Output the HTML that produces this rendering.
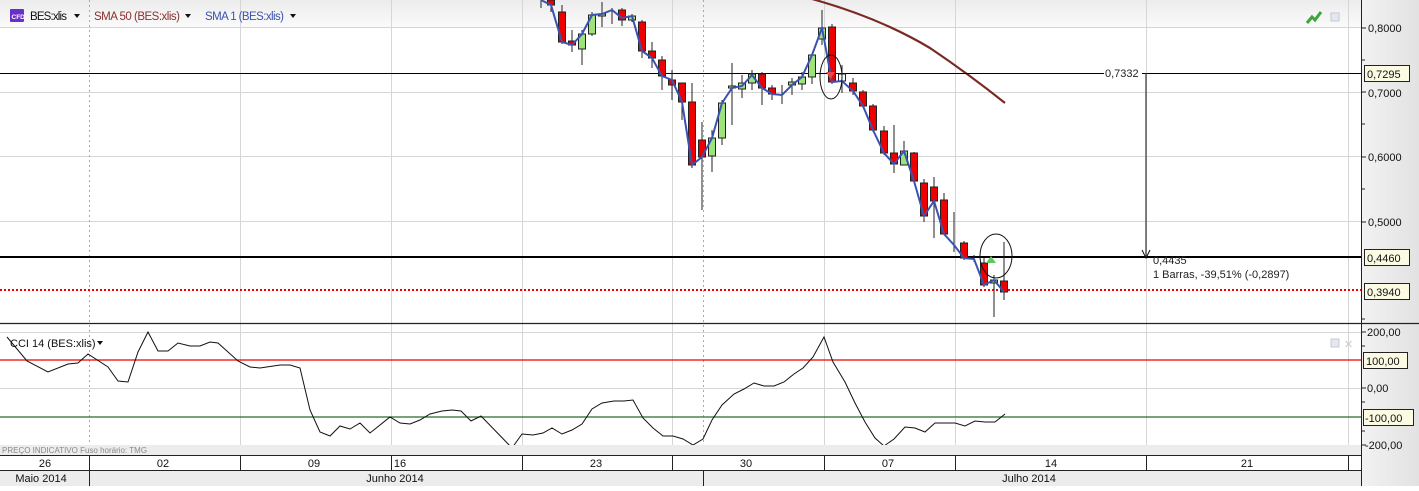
<!DOCTYPE html>
<html><head><meta charset="utf-8"><style>
html,body{margin:0;padding:0;background:#fff;}
body{width:1419px;height:486px;overflow:hidden;font-family:"Liberation Sans","DejaVu Sans",sans-serif;}
svg text{font-family:"Liberation Sans","DejaVu Sans",sans-serif;}
</style></head><body>
<svg width="1419" height="486" viewBox="0 0 1419 486" xmlns="http://www.w3.org/2000/svg">
<defs>
<linearGradient id="ax" x1="0" x2="1"><stop offset="0" stop-color="#f2f2f2"/><stop offset="1" stop-color="#e2e2e2"/></linearGradient>
<linearGradient id="hd" x1="0" y1="0" x2="0" y2="1"><stop offset="0" stop-color="#ececec"/><stop offset="1" stop-color="#fafafa"/></linearGradient>
</defs>
<rect x="0" y="0" width="1419" height="486" fill="#fff"/>
<rect x="0" y="0" width="1361" height="27" fill="url(#hd)"/>
<rect x="1361" y="0" width="58" height="486" fill="url(#ax)"/>
<g stroke="#d6d6d6" stroke-width="1">
<line x1="0" y1="27.5" x2="1361" y2="27.5"/>
<line x1="0" y1="92.5" x2="1361" y2="92.5"/>
<line x1="0" y1="156.5" x2="1361" y2="156.5"/>
<line x1="0" y1="221.5" x2="1361" y2="221.5"/>
<line x1="0" y1="332.5" x2="1361" y2="332.5"/>
<line x1="0" y1="388.5" x2="1361" y2="388.5"/>
<line x1="0" y1="445.5" x2="1361" y2="445.5"/>
</g>
<g stroke="#d6d6d6" stroke-width="1">
<line x1="240.5" y1="0" x2="240.5" y2="455"/>
<line x1="391.5" y1="0" x2="391.5" y2="455"/>
<line x1="522.5" y1="0" x2="522.5" y2="455"/>
<line x1="672.5" y1="0" x2="672.5" y2="455"/>
<line x1="824.5" y1="0" x2="824.5" y2="455"/>
<line x1="955.5" y1="0" x2="955.5" y2="455"/>
<line x1="1146.5" y1="0" x2="1146.5" y2="455"/>
<line x1="1348.5" y1="0" x2="1348.5" y2="455"/>
</g>
<g stroke="#aaa" stroke-width="1" stroke-dasharray="2,3">
<line x1="89.5" y1="0" x2="89.5" y2="455"/>
<line x1="703.5" y1="0" x2="703.5" y2="455"/>
</g>
<rect x="10" y="9" width="14" height="13" rx="1" fill="#6a2fc8"/>
<text x="11.5" y="19" font-size="6.5" fill="#fff" font-weight="bold">CFD</text>
<text x="30" y="20" font-size="11.5" fill="#111" textLength="37">BES:xlis</text>
<path d="M74 14 l6 0 l-3 4z" fill="#111"/>
<text x="94" y="20" font-size="11.5" fill="#8b2f2f" textLength="86">SMA 50 (BES:xlis)</text>
<path d="M185 14 l6 0 l-3 4z" fill="#111"/>
<text x="205" y="20" font-size="11.5" fill="#3b52b0" textLength="79">SMA 1 (BES:xlis)</text>
<path d="M290 14 l6 0 l-3 4z" fill="#111"/>
<path d="M1307 23 l5 -6 l3 3 l6 -8" stroke="#3aa63a" stroke-width="3" fill="none"/>
<rect x="1331" y="13" width="8" height="8" fill="#e4e8ee" stroke="#c4cad4"/>
<path d="M812 -1 Q 880 18 930 48 Q 970 75 1005 103" stroke="#7a2a24" stroke-width="2.2" fill="none"/>
<line x1="0" y1="73.5" x2="1361" y2="73.5" stroke="#000" stroke-width="1"/>
<line x1="0" y1="257" x2="1361" y2="257" stroke="#000" stroke-width="2"/>
<line x1="0" y1="290" x2="1361" y2="290" stroke="#e00" stroke-width="2" stroke-dasharray="2,2"/>
<g stroke="#222" stroke-width="1">
<line x1="541" y1="0" x2="541" y2="8"/><line x1="551" y1="0" x2="551" y2="12"/>
<line x1="562" y1="5" x2="562" y2="44"/><line x1="572" y1="30" x2="572" y2="52"/>
<line x1="582" y1="30" x2="582" y2="65"/><line x1="592" y1="12" x2="592" y2="36"/>
<line x1="602" y1="2" x2="602" y2="27"/><line x1="612" y1="8" x2="612" y2="24"/>
<line x1="622" y1="8" x2="622" y2="26"/><line x1="632" y1="14" x2="632" y2="22"/>
<line x1="642" y1="20" x2="642" y2="58"/><line x1="652" y1="42" x2="652" y2="68"/>
<line x1="662" y1="56" x2="662" y2="90"/><line x1="672" y1="70" x2="672" y2="100"/>
<line x1="682" y1="83" x2="682" y2="120"/><line x1="692" y1="83" x2="692" y2="168"/>
<line x1="702" y1="122" x2="702" y2="210"/><line x1="712" y1="130" x2="712" y2="172"/>
<line x1="722" y1="100" x2="722" y2="145"/><line x1="732" y1="63" x2="732" y2="125"/>
<line x1="742" y1="75" x2="742" y2="98"/><line x1="752" y1="70" x2="752" y2="90"/>
<line x1="762" y1="72" x2="762" y2="105"/><line x1="772" y1="85" x2="772" y2="100"/>
<line x1="782" y1="85" x2="782" y2="104"/><line x1="792" y1="78" x2="792" y2="95"/>
<line x1="802" y1="72" x2="802" y2="90"/><line x1="812" y1="55" x2="812" y2="84"/>
<line x1="822" y1="10" x2="822" y2="45"/><line x1="832" y1="24" x2="832" y2="84"/>
<line x1="842" y1="65" x2="842" y2="93"/><line x1="853" y1="78" x2="853" y2="95"/>
<line x1="863" y1="90" x2="863" y2="108"/><line x1="873" y1="104" x2="873" y2="132"/>
<line x1="884" y1="126" x2="884" y2="155"/><line x1="894" y1="125" x2="894" y2="173"/>
<line x1="904" y1="141" x2="904" y2="165"/><line x1="914" y1="152" x2="914" y2="182"/>
<line x1="924" y1="179" x2="924" y2="222"/><line x1="934" y1="177" x2="934" y2="238"/>
<line x1="944" y1="193" x2="944" y2="234"/><line x1="954" y1="212" x2="954" y2="252"/>
<line x1="964" y1="241" x2="964" y2="260"/><line x1="974" y1="255" x2="974" y2="262"/>
<line x1="984" y1="258" x2="984" y2="287"/><line x1="994" y1="275" x2="994" y2="317"/>
<line x1="1004" y1="242" x2="1004" y2="300"/>
</g>
<g stroke="#222" stroke-width="1">
<rect x="547.5" y="0" width="7" height="5" fill="#e00"/>
<rect x="558.5" y="12" width="7" height="30" fill="#e00"/>
<rect x="568.5" y="41" width="7" height="4" fill="#e00"/>
<rect x="578.5" y="34" width="7" height="15" fill="#9de37a"/>
<rect x="588.5" y="15" width="7" height="19" fill="#9de37a"/>
<rect x="598.5" y="14" width="7" height="2" fill="#9de37a"/>
<rect x="618.5" y="10" width="7" height="10" fill="#e00"/>
<rect x="628.5" y="16" width="7" height="4" fill="#9de37a"/>
<rect x="638.5" y="22" width="7" height="29" fill="#e00"/>
<rect x="648.5" y="51" width="7" height="7" fill="#e00"/>
<rect x="658.5" y="60" width="7" height="16" fill="#e00"/>
<rect x="668.5" y="80" width="7" height="5" fill="#e00"/>
<rect x="678.5" y="83" width="7" height="19" fill="#e00"/>
<rect x="688.5" y="102" width="7" height="63" fill="#e00"/>
<rect x="698.5" y="140" width="7" height="17" fill="#e00"/>
<rect x="708.5" y="138" width="7" height="18" fill="#9de37a"/>
<rect x="718.5" y="103" width="7" height="35" fill="#9de37a"/>
<rect x="728.5" y="86" width="7" height="2" fill="#9de37a"/>
<rect x="738.5" y="83" width="7" height="6" fill="#9de37a"/>
<rect x="748.5" y="74" width="7" height="9" fill="#9de37a"/>
<rect x="758.5" y="74" width="7" height="14" fill="#e00"/>
<rect x="768.5" y="88" width="7" height="6" fill="#e00"/>
<rect x="788.5" y="82" width="7" height="3" fill="#9de37a"/>
<rect x="798.5" y="77" width="7" height="7" fill="#9de37a"/>
<rect x="808.5" y="55" width="7" height="22" fill="#9de37a"/>
<rect x="818.5" y="28" width="7" height="11" fill="#9de37a"/>
<rect x="828.5" y="27" width="7" height="55" fill="#e00"/>
<rect x="838.5" y="74" width="7" height="7" fill="#fff"/>
<rect x="849.5" y="83" width="7" height="8" fill="#e00"/>
<rect x="859.5" y="92" width="7" height="14" fill="#e00"/>
<rect x="869.5" y="106" width="7" height="24" fill="#e00"/>
<rect x="880.5" y="131" width="7" height="22" fill="#e00"/>
<rect x="890.5" y="153" width="7" height="11" fill="#e00"/>
<rect x="900.5" y="151" width="7" height="14" fill="#9de37a"/>
<rect x="910.5" y="153" width="7" height="28" fill="#e00"/>
<rect x="920.5" y="183" width="7" height="33" fill="#e00"/>
<rect x="930.5" y="187" width="7" height="14" fill="#e00"/>
<rect x="940.5" y="200" width="7" height="34" fill="#e00"/>
<rect x="960.5" y="243" width="7" height="15" fill="#e00"/>
<rect x="980.5" y="263" width="7" height="22" fill="#e00"/>
<rect x="990.5" y="280" width="7" height="3" fill="#9de37a"/>
<rect x="1000.5" y="281" width="7" height="11" fill="#e00"/>
</g>
<polyline fill="none" stroke="#3b52b0" stroke-width="2" points="541,0 551,5 562,42 572,45 582,34 592,15 602,14 612,10 622,18 632,16 642,51 652,58 662,76 672,80 682,102 692,165 702,157 712,138 722,103 732,88 742,86 752,75 762,88 772,94 782,95 792,85 802,77 812,55 822,28 832,82 842,81 853,91 863,106 873,130 884,153 894,164 904,151 914,181 924,216 934,201 944,234 954,245 964,258 974,259 984,285 994,280 1004,292"/>
<ellipse cx="831" cy="77" rx="11" ry="22" fill="none" stroke="#111"/>
<path d="M826 72 l9 0 l-4.5 7z" fill="#e84a4a"/>
<ellipse cx="996" cy="256" rx="16" ry="22" fill="none" stroke="#111"/>
<path d="M986 263 l10 0 l-5 -7z" fill="#5cc95c"/>
<line x1="1146" y1="73" x2="1146" y2="257" stroke="#333" stroke-width="1.2"/>
<path d="M1142 250 l4 8 l4 -8" stroke="#111" fill="none"/>
<rect x="1104" y="66" width="38" height="13" fill="#fff"/>
<text x="1105" y="77" font-size="11" fill="#222">0,7332</text>
<text x="1153" y="264" font-size="11" fill="#222">0,4435</text>
<text x="1153" y="278" font-size="11" fill="#222">1 Barras, -39,51% (-0,2897)</text>
<line x1="0" y1="323.5" x2="1419" y2="323.5" stroke="#222" stroke-width="1.3"/>
<line x1="0" y1="360" x2="1361" y2="360" stroke="#e00" stroke-width="1.3"/>
<line x1="0" y1="417" x2="1361" y2="417" stroke="#2a6a2a" stroke-width="1.2"/>
<text x="10" y="347" font-size="11" fill="#111">CCI 14 (BES:xlis)</text>
<path d="M97 341 l6 0 l-3 4z" fill="#111"/>
<rect x="1331" y="339" width="8" height="8" fill="#e4e8ee" stroke="#c4cad4"/>
<text x="1344" y="348" font-size="11" fill="#ccc">✕</text>
<polyline fill="none" stroke="#111" stroke-width="1" points="7,337 27,361 48,372 68,364 78,363 88,354 108,367 118,381 128,382 138,352 148,332 158,351 168,351 178,343 190,346 200,346 210,342 218,343 238,361 250,367 260,368 280,365 290,365 300,368 310,410 320,432 330,436 340,426 350,429 360,423 370,433 380,425 390,417 400,423 410,424 420,420 430,414 442,411 452,410 461,411 471,421 481,416 512,448 522,434 533,435 543,433 552,428 562,434 572,430 582,424 592,409 602,403 614,401 624,401 633,400 643,418 653,428 663,436 673,436 683,439 693,445 703,439 712,420 722,405 734,394 744,389 754,383 764,386 774,386 784,382 794,374 803,368 813,357 824,337 833,362 845,382 855,403 865,422 875,438 884,446 894,439 905,427 915,428 925,432 935,423 945,423 955,423 965,426 975,421 985,422 995,422 1005,414"/>
<rect x="0" y="445" width="1361" height="10" fill="#ececec"/>
<text x="2" y="453" font-size="8" fill="#888">PREÇO INDICATIVO   Fuso horário: TMG</text>
<rect x="0" y="455" width="1361" height="15" fill="#fff"/>
<rect x="0" y="470" width="1361" height="16" fill="#ececec"/>
<line x1="0" y1="455.5" x2="1361" y2="455.5" stroke="#222"/>
<line x1="0" y1="470.5" x2="1361" y2="470.5" stroke="#222"/>
<g stroke="#222">
<line x1="89.5" y1="455" x2="89.5" y2="486"/>
<line x1="240.5" y1="455" x2="240.5" y2="470"/>
<line x1="391.5" y1="455" x2="391.5" y2="470"/>
<line x1="522.5" y1="455" x2="522.5" y2="470"/>
<line x1="672.5" y1="455" x2="672.5" y2="470"/>
<line x1="824.5" y1="455" x2="824.5" y2="470"/>
<line x1="955.5" y1="455" x2="955.5" y2="470"/>
<line x1="1146.5" y1="455" x2="1146.5" y2="470"/>
<line x1="1348.5" y1="455" x2="1348.5" y2="470"/>
<line x1="703.5" y1="470" x2="703.5" y2="486"/>
</g>
<g font-size="11" fill="#111" text-anchor="middle">
<text x="45" y="467">26</text><text x="163" y="467">02</text><text x="314" y="467">09</text>
<text x="400" y="467">16</text><text x="596" y="467">23</text><text x="746" y="467">30</text>
<text x="888" y="467">07</text><text x="1051" y="467">14</text><text x="1247" y="467">21</text>
<text x="41" y="482">Maio 2014</text><text x="395" y="482">Junho 2014</text><text x="1029" y="482">Julho 2014</text>
</g>
<line x1="1361.5" y1="0" x2="1361.5" y2="486" stroke="#222"/>
<g stroke="#222">
<line x1="1361" y1="28" x2="1366" y2="28"/><line x1="1361" y1="60" x2="1365" y2="60"/>
<line x1="1361" y1="92" x2="1366" y2="92"/><line x1="1361" y1="124" x2="1365" y2="124"/>
<line x1="1361" y1="157" x2="1366" y2="157"/><line x1="1361" y1="189" x2="1365" y2="189"/>
<line x1="1361" y1="222" x2="1366" y2="222"/><line x1="1361" y1="319" x2="1365" y2="319"/>
<line x1="1361" y1="332" x2="1366" y2="332"/><line x1="1361" y1="346" x2="1365" y2="346"/>
<line x1="1361" y1="388" x2="1366" y2="388"/><line x1="1361" y1="402" x2="1365" y2="402"/>
<line x1="1361" y1="431" x2="1365" y2="431"/><line x1="1361" y1="445" x2="1366" y2="445"/>
</g>
<g font-size="11" fill="#111">
<text x="1368" y="32">0,8000</text><text x="1368" y="97">0,7000</text>
<text x="1368" y="161">0,6000</text><text x="1368" y="226">0,5000</text>
<text x="1367" y="336">200,00</text><text x="1367" y="392">0,00</text><text x="1365" y="449">-200,00</text>
</g>
<g font-size="11" fill="#111" stroke-width="1">
<rect x="1364.5" y="65.5" width="45" height="16" fill="#fbfbe4" stroke="#222"/><text x="1367" y="78">0,7295</text>
<rect x="1364.5" y="249.5" width="45" height="16" fill="#fbfbe4" stroke="#222"/><text x="1367" y="262">0,4460</text>
<rect x="1364.5" y="283.5" width="45" height="16" fill="#fbfbe4" stroke="#222"/><text x="1367" y="296">0,3940</text>
<rect x="1363.5" y="352.5" width="44" height="16" fill="#fbfbe4" stroke="#222"/><text x="1366" y="365">100,00</text>
<rect x="1363.5" y="409.5" width="50" height="16" fill="#fbfbe4" stroke="#222"/><text x="1365" y="422">-100,00</text>
</g>
</svg>
</body></html>
